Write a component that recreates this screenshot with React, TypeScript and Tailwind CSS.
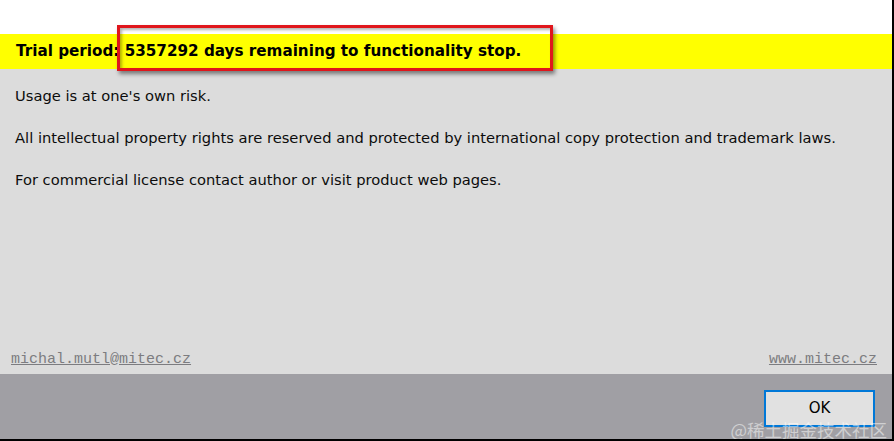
const body = "font-['DejaVu_Sans',Tahoma,sans-serif]";

export default function App() {
  return (
    <div className="relative w-[894px] h-[441px] overflow-hidden bg-white border-r-2 border-b-2 border-black">
      <div className="flex flex-col h-full">
        <div className="h-[34px] shrink-0" />
        <div className={`h-[35px] shrink-0 bg-[#ffff00] flex items-center pl-[16px] ${body} font-bold text-[15.2px] text-black`}>
          Trial period: 5357292 days remaining to functionality stop.
        </div>
        <div className={`flex-1 bg-[#dcdcdc] flex flex-col px-[15px] pt-[17px] ${body} text-[14.7px] text-[#0c0c0c]`}>
          <p className="leading-[20px]">Usage is at one's own risk.</p>
          <p className="leading-[20px] mt-[22px]">
            All intellectual property rights are reserved and protected by international copy protection and trademark laws.
          </p>
          <p className="leading-[20px] mt-[22px]">For commercial license contact author or visit product web pages.</p>
          <div className="mt-auto flex justify-between pb-[3px] -ml-[4px] font-['Liberation_Mono',monospace] text-[15px] text-[#7c7c80]">
            <a href="#" className="underline">michal.mutl@mitec.cz</a>
            <a href="#" className="underline">www.mitec.cz</a>
          </div>
        </div>
        <div className="h-[65px] shrink-0 bg-[#a09fa4] flex justify-end items-start pt-[16px] pr-[17px]">
          <button className="w-[111px] h-[37px] bg-[#e1e1e1] border-2 border-[#0078d7] font-['DejaVu_Sans',Tahoma,sans-serif] text-[15px] text-black">
            OK
          </button>
        </div>
      </div>
      <div className="absolute left-[117px] top-[25px] w-[436px] h-[46px] border-[3px] border-[#e0161c] shadow-[2px_3px_4px_rgba(0,0,0,0.45),inset_2px_2px_3px_rgba(0,0,0,0.3)]" />
      <div className="absolute right-[5px] bottom-[1px] font-['Noto_Sans_CJK_SC',sans-serif] text-[17.5px] text-white/50 leading-none">
        @稀土掘金技术社区
      </div>
    </div>
  );
}
